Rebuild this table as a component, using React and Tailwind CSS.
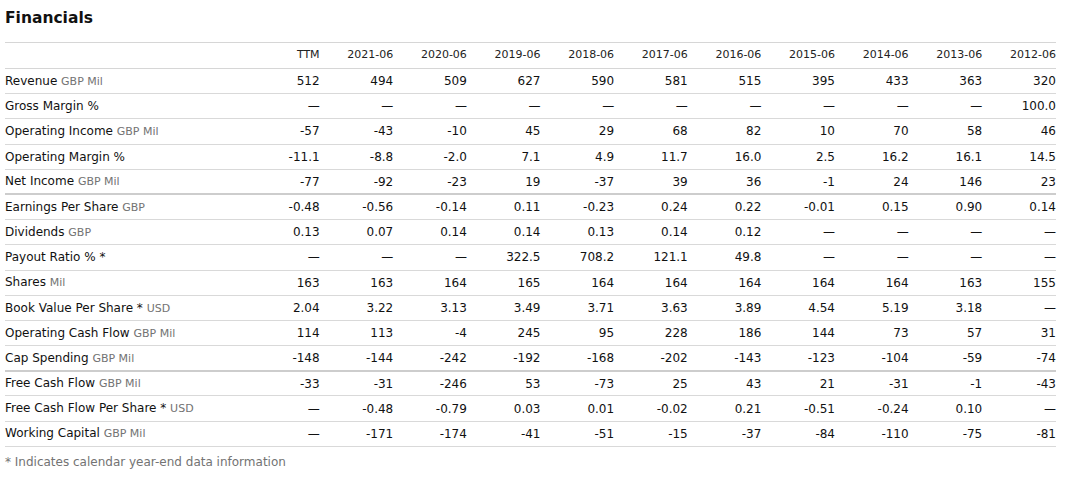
import React from "react";

const years = ["TTM","2021-06","2020-06","2019-06","2018-06","2017-06","2016-06","2015-06","2014-06","2013-06","2012-06"];
const D = "—";
const rows = [
  { l: "Revenue", u: "GBP Mil", v: ["512","494","509","627","590","581","515","395","433","363","320"] },
  { l: "Gross Margin %", u: "", v: [D,D,D,D,D,D,D,D,D,D,"100.0"] },
  { l: "Operating Income", u: "GBP Mil", v: ["-57","-43","-10","45","29","68","82","10","70","58","46"] },
  { l: "Operating Margin %", u: "", v: ["-11.1","-8.8","-2.0","7.1","4.9","11.7","16.0","2.5","16.2","16.1","14.5"] },
  { l: "Net Income", u: "GBP Mil", v: ["-77","-92","-23","19","-37","39","36","-1","24","146","23"], thick: true },
  { l: "Earnings Per Share", u: "GBP", v: ["-0.48","-0.56","-0.14","0.11","-0.23","0.24","0.22","-0.01","0.15","0.90","0.14"] },
  { l: "Dividends", u: "GBP", v: ["0.13","0.07","0.14","0.14","0.13","0.14","0.12",D,D,D,D] },
  { l: "Payout Ratio % *", u: "", v: [D,D,D,"322.5","708.2","121.1","49.8",D,D,D,D] },
  { l: "Shares", u: "Mil", v: ["163","163","164","165","164","164","164","164","164","163","155"] },
  { l: "Book Value Per Share *", u: "USD", v: ["2.04","3.22","3.13","3.49","3.71","3.63","3.89","4.54","5.19","3.18",D] },
  { l: "Operating Cash Flow", u: "GBP Mil", v: ["114","113","-4","245","95","228","186","144","73","57","31"] },
  { l: "Cap Spending", u: "GBP Mil", v: ["-148","-144","-242","-192","-168","-202","-143","-123","-104","-59","-74"], thick: true },
  { l: "Free Cash Flow", u: "GBP Mil", v: ["-33","-31","-246","53","-73","25","43","21","-31","-1","-43"] },
  { l: "Free Cash Flow Per Share *", u: "USD", v: [D,"-0.48","-0.79","0.03","0.01","-0.02","0.21","-0.51","-0.24","0.10",D] },
  { l: "Working Capital", u: "GBP Mil", v: [D,"-171","-174","-41","-51","-15","-37","-84","-110","-75","-81"] },
];

export default function App() {
  return (
    <div className="w-[1065px] h-[482px] bg-white px-[5px] pt-[7px] text-[#222]" style={{ fontFamily: '"DejaVu Sans", Verdana, sans-serif' }}>
      <h2 className="text-[15.5px] font-bold leading-[22px] text-[#111] h-[35px]">Financials</h2>
      <table className="table-fixed border-collapse w-[1051px] text-[12px]">
        <colgroup>
          <col className="w-[241px]" />
          {years.map((y) => <col key={y} />)}
        </colgroup>
        <thead>
          <tr className="border-t border-b border-[#d6d6d6]">
            <th className="h-[26px] p-0"></th>
            {years.map((y) => (
              <th key={y} className="h-[26px] p-0 text-right font-normal text-[11px] text-[#222]">{y}</th>
            ))}
          </tr>
        </thead>
        <tbody>
          {rows.map((r) => (
            <tr key={r.l} className={r.thick ? "border-b-2 border-[#cdcdcd]" : "border-b border-[#d9d9d9]"}>
              <td className="h-[25.2px] p-0 text-left whitespace-nowrap text-[#111]">
                {r.l}{r.u ? " " : ""}
                {r.u && <span className="text-[11px] text-[#737373]">{r.u}</span>}
              </td>
              {r.v.map((v, i) => (
                <td key={i} className="h-[25.2px] p-0 text-right text-[#111]">{v}</td>
              ))}
            </tr>
          ))}
        </tbody>
      </table>
      <div className="mt-[6px] text-[12px] text-[#737373]">* Indicates calendar year-end data information</div>
    </div>
  );
}
